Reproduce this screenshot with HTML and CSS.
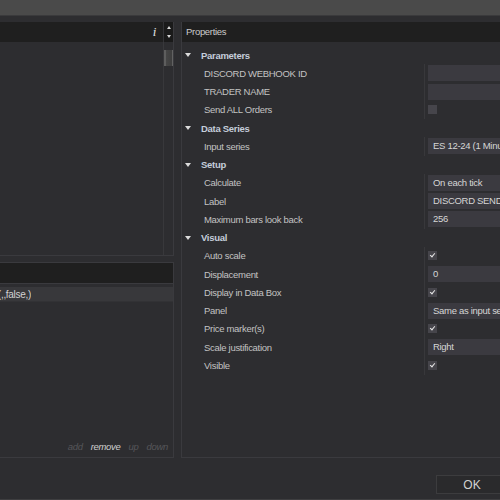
FILE: index.html
```html
<!DOCTYPE html>
<html lang="en">
<head>
<meta charset="UTF-8">
<title>Indicators</title>
<link rel="stylesheet" href="styles.css">
</head>
<body>

<div class="titlebar"></div>

<div class="dialog">
  <div class="leftcol">
    <div class="box-top">
      <div class="box-header">
        <span class="info">i</span>
        <div class="spin"><span class="up"></span><span class="down"></span></div>
      </div>
      <div class="box-body">
        <div class="list-area"></div>
        <div class="scroll"><div class="thumb"></div></div>
      </div>
    </div>
    <div class="filter"></div>
    <div class="list">
      <div class="list-row"><div class="clip"><span>DiscordSender(,,false,)</span></div></div>
      <div class="list-actions">
        <span class="dim">add</span>
        <span class="on">remove</span>
        <span class="dim">up</span>
        <span class="dim">down</span>
      </div>
    </div>
  </div>

  <div class="props">
    <div class="props-header">Properties</div>
    <div class="props-rows">
      <div class="cat"><span class="tri"></span>Parameters</div>
      <div class="item"><span class="lbl">DISCORD WEBHOOK ID</span><span class="val"><span class="field"></span></span></div>
      <div class="item"><span class="lbl">TRADER NAME</span><span class="val"><span class="field"></span></span></div>
      <div class="item"><span class="lbl">Send ALL Orders</span><span class="val"><span class="check"></span></span></div>

      <div class="cat"><span class="tri"></span>Data Series</div>
      <div class="item"><span class="lbl">Input series</span><span class="val"><span class="field">ES 12-24 (1 Minute)</span></span></div>

      <div class="cat"><span class="tri"></span>Setup</div>
      <div class="item"><span class="lbl">Calculate</span><span class="val"><span class="field">On each tick</span></span></div>
      <div class="item"><span class="lbl">Label</span><span class="val"><span class="field">DISCORD SENDER</span></span></div>
      <div class="item"><span class="lbl">Maximum bars look back</span><span class="val"><span class="field">256</span></span></div>

      <div class="cat"><span class="tri"></span>Visual</div>
      <div class="item"><span class="lbl">Auto scale</span><span class="val"><span class="check checked"></span></span></div>
      <div class="item"><span class="lbl">Displacement</span><span class="val"><span class="field">0</span></span></div>
      <div class="item"><span class="lbl">Display in Data Box</span><span class="val"><span class="check checked"></span></span></div>
      <div class="item"><span class="lbl">Panel</span><span class="val"><span class="field">Same as input series</span></span></div>
      <div class="item"><span class="lbl">Price marker(s)</span><span class="val"><span class="check checked"></span></span></div>
      <div class="item"><span class="lbl">Scale justification</span><span class="val"><span class="field">Right</span></span></div>
      <div class="item"><span class="lbl">Visible</span><span class="val"><span class="check checked"></span></span></div>
    </div>
  </div>
</div>

<div class="footer">
  <button type="button" class="ok">OK</button>
</div>

</body>
</html>
```

FILE: styles.css
```css
* {
  box-sizing: border-box;
  padding: 0px;
  margin: 0px;
}

body {
  width: 500px;
  height: 500px;
  overflow: hidden;
  background-color: #2d2d30;
  font-family: "Liberation Sans", Arial, sans-serif;
  font-size: 9.5px;
  letter-spacing: -0.3px;
  color: #c4c4c4;
}

.titlebar {
  height: 16px;
  background-color: #4a4a4a;
  border-bottom: 1px solid #3a3a3c;
}

.dialog {
  display: grid;
  grid-template-columns: 174px 330px;
  column-gap: 7px;
  padding-top: 6px;
  height: 442px;
}

/* left column */
.leftcol {
  display: flex;
  flex-direction: column;
}

.box-top {
  height: 234px;
  display: flex;
  flex-direction: column;
  border-right: 1px solid #3a3a3e;
  border-bottom: 1px solid #3a3a3e;
}

.box-header {
  height: 20px;
  display: flex;
  justify-content: flex-end;
  align-items: center;
  background-color: #1f1f1f;
}

.info {
  font-family: "Liberation Serif", serif;
  font-style: italic;
  font-size: 13px;
  color: #e2e2e2;
  margin-right: 7px;
}

.spin {
  width: 10px;
  height: 20px;
  display: flex;
  flex-direction: column;
  justify-content: space-between;
  align-items: center;
  padding: 4px 0 4px;
  background-color: #1a1a1a;
  border-left: 1px solid #333336;
}

.up {
  border-left: 2.5px solid transparent;
  border-right: 2.5px solid transparent;
  border-bottom: 3px solid #d8d8d8;
}

.down {
  border-left: 2.5px solid transparent;
  border-right: 2.5px solid transparent;
  border-top: 3px solid #d8d8d8;
}

.box-body {
  flex: 1;
  display: flex;
}

.list-area {
  flex: 1;
}

.scroll {
  width: 10px;
  border-left: 1px solid #38383b;
  padding-top: 8px;
}

.thumb {
  height: 16px;
  background: linear-gradient(to right, #5e5e5e 0px, #5e5e5e 2px, #464646 2px, #3e3e3e 100%);
  border-right: 1px solid #626262;
}

.filter {
  height: 22px;
  margin-top: 6px;
  background-color: #1f1f1f;
  border: 1px solid #3a3a3e;
  border-left: 0;
}

.list {
  flex: 1;
  display: flex;
  flex-direction: column;
  border-right: 1px solid #3a3a3e;
  border-bottom: 1px solid #3a3a3e;
  padding-top: 3px;
}

.list-row {
  height: 15px;
  background-color: #38383b;
  border-bottom: 1px solid #323235;
}

.clip {
  width: 31px;
  height: 14px;
  display: flex;
  justify-content: flex-end;
  align-items: center;
  overflow: hidden;
  white-space: nowrap;
  color: #d2d2d2;
  font-size: 10px;
}

.list-actions {
  margin-top: auto;
  display: flex;
  justify-content: flex-end;
  gap: 8px;
  padding: 0 5px 5px 0;
  font-style: italic;
}

.dim {
  color: #56565a;
}

.on {
  color: #cfcfcf;
}

/* properties */
.props {
  border-left: 1px solid #3a3a3e;
  border-bottom: 1px solid #3a3a3e;
}

.props-header {
  height: 20px;
  line-height: 20px;
  padding-left: 4px;
  background-color: #1f1f1f;
  color: #cccccc;
}

.props-rows {
  padding-top: 4px;
}

.cat {
  height: 18.25px;
  display: flex;
  align-items: center;
  font-weight: bold;
  color: #c5cedb;
}

.tri {
  margin: 0 10px 0 3px;
  border-left: 3.5px solid transparent;
  border-right: 3.5px solid transparent;
  border-top: 4px solid #dcdcdc;
}

.item {
  height: 18.25px;
  display: grid;
  grid-template-columns: 242px 1fr;
}

.lbl {
  padding-left: 22px;
  display: flex;
  align-items: center;
  color: #c3c3c3;
}

.val {
  display: flex;
  align-items: center;
  padding-left: 3px;
  border-left: 1px solid #38383b;
  overflow: hidden;
}

.field {
  flex: 1;
  height: 16px;
  line-height: 16px;
  padding-left: 5px;
  background-color: #3b3a40;
  color: #d6d6d6;
  white-space: nowrap;
  overflow: hidden;
}

.check {
  width: 9px;
  height: 9px;
  background-color: #46454b;
  position: relative;
}

.checked::after {
  content: "";
  position: absolute;
  left: 2.5px;
  top: 1px;
  width: 2px;
  height: 4px;
  border-right: 1.5px solid #e8e8e8;
  border-bottom: 1.5px solid #e8e8e8;
  transform: rotate(40deg);
}

/* footer */
.footer {
  height: 42px;
  padding: 17px 0 0 436px;
  border-bottom: 1px solid #3e3e40;
}

.ok {
  width: 72px;
  height: 19px;
  background-color: #2a2a2c;
  border: 1px solid #3c3c3e;
  color: #d2d2d2;
  font-family: "Liberation Sans", Arial, sans-serif;
  font-size: 12px;
}
```
